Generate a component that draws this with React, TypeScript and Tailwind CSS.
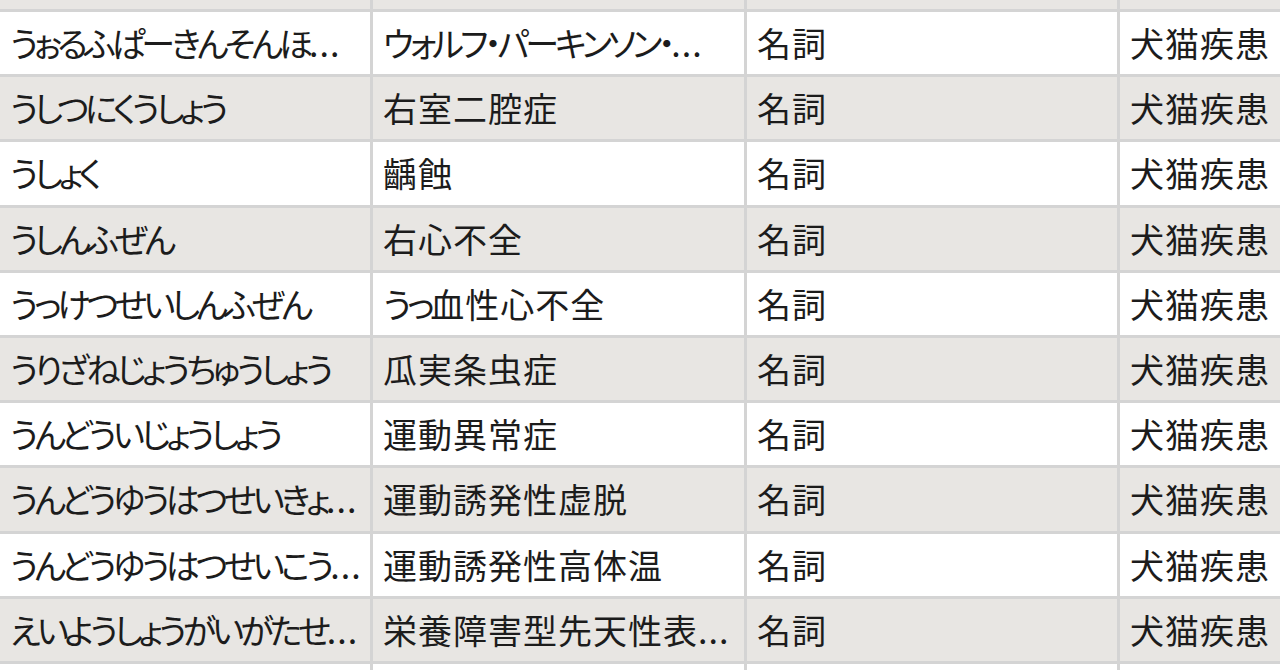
import React from 'react';

type Row = { yomi: string; word: string; pos: string; dict: string };

const rows: Row[] = [
  { yomi: 'うぉるふぱーきんそんほ...', word: 'ウォルフ・パーキンソン・...', pos: '名詞', dict: '犬猫疾患' },
  { yomi: 'うしつにくうしょう', word: '右室二腔症', pos: '名詞', dict: '犬猫疾患' },
  { yomi: 'うしょく', word: '齲蝕', pos: '名詞', dict: '犬猫疾患' },
  { yomi: 'うしんふぜん', word: '右心不全', pos: '名詞', dict: '犬猫疾患' },
  { yomi: 'うっけつせいしんふぜん', word: 'うっ血性心不全', pos: '名詞', dict: '犬猫疾患' },
  { yomi: 'うりざねじょうちゅうしょう', word: '瓜実条虫症', pos: '名詞', dict: '犬猫疾患' },
  { yomi: 'うんどういじょうしょう', word: '運動異常症', pos: '名詞', dict: '犬猫疾患' },
  { yomi: 'うんどうゆうはつせいきょ...', word: '運動誘発性虚脱', pos: '名詞', dict: '犬猫疾患' },
  { yomi: 'うんどうゆうはつせいこう...', word: '運動誘発性高体温', pos: '名詞', dict: '犬猫疾患' },
  { yomi: 'えいようしょうがいがたせ...', word: '栄養障害型先天性表...', pos: '名詞', dict: '犬猫疾患' },
];

// kana in the grid font are narrower than in Noto, so tighten kana runs only
const Text: React.FC<{ value: string }> = ({ value }) => {
  const parts = value.split(/([\u3040-\u30ff\u30fb\u30fc]+)/).filter(Boolean);
  return (
    <>
      {parts.map((p, i) =>
        /[\u3040-\u30ff]/.test(p) ? (
          <span key={i} className="tracking-[-4px]">
            {p}
          </span>
        ) : (
          <span key={i} className="tracking-[1px]">
            {p}
          </span>
        )
      )}
    </>
  );
};

const Cell: React.FC<{ value?: string; last?: boolean }> = ({ value, last }) => (
  <div
    className={`flex items-center overflow-hidden whitespace-nowrap pl-[10px] ${
      last ? '' : 'border-r-[3px] border-[#d4d4d4]'
    }`}
  >
    {value && <Text value={value} />}
  </div>
);

const App: React.FC = () => {
  return (
    <div
      className="h-[670px] w-[1280px] overflow-hidden bg-white text-[34px] leading-none text-[#1c1c1c] [font-feature-settings:'palt']"
      style={{ fontFamily: '"Noto Sans CJK JP", "Noto Sans", sans-serif' }}
    >
      {/* partially visible row above */}
      <div className="grid h-[12px] grid-cols-[373px_374px_373px_1fr] border-b-[3px] border-[#d4d4d4] bg-[#e8e6e3]">
        <Cell />
        <Cell />
        <Cell />
        <Cell last />
      </div>

      {rows.map((r, i) => (
        <div
          key={i}
          className={`grid h-[65.2px] grid-cols-[373px_374px_373px_1fr] border-b-[3px] border-[#d4d4d4] ${
            i % 2 === 0 ? 'bg-white' : 'bg-[#e8e6e3]'
          }`}
        >
          <Cell value={r.yomi} />
          <Cell value={r.word} />
          <Cell value={r.pos} />
          <Cell value={r.dict} last />
        </div>
      ))}

      {/* next row, cut off at the bottom */}
      <div className="grid h-[65.2px] grid-cols-[373px_374px_373px_1fr] bg-white">
        <Cell />
        <Cell />
        <Cell />
        <Cell last />
      </div>
    </div>
  );
};

export default App;
